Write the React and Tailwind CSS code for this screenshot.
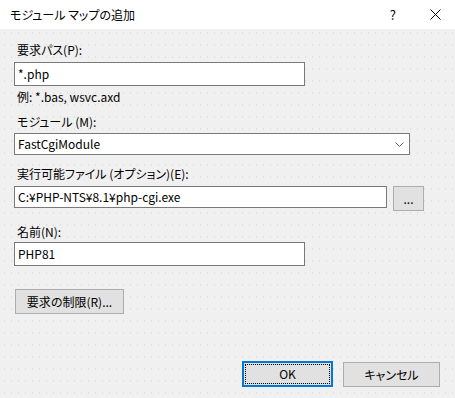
import React from 'react'

const font = "font-['Noto_Sans_CJK_JP','Noto_Sans',sans-serif] [font-feature-settings:'palt']"

const Label = ({ children, className = '' }) => (
  <div className={`pl-[3px] text-[12px] leading-[16px] text-black ${className}`}>{children}</div>
)

const TextBox = ({ value, className = '' }) => (
  <div className={`flex items-center border border-[#7a7a7a] bg-white pl-[3px] text-[12px] text-black ${className}`}>
    {value}
  </div>
)

const Button = ({ children, className = '' }) => (
  <div className={`flex items-center justify-center border border-[#adadad] bg-[#e1e1e1] text-[12px] text-black ${className}`}>
    {children}
  </div>
)

export default function App() {
  return (
    <div className={`flex h-[398px] w-[455px] flex-col overflow-hidden bg-[#f0f0f0] ${font}`}>
      {/* title bar */}
      <div className="flex h-[29px] shrink-0 items-center bg-white">
        <span className="pl-[10px] text-[12px] text-black">モジュール マップの追加</span>
        <span className="ml-auto mr-[34px] text-[13px] text-black">?</span>
        <svg width="11" height="11" viewBox="0 0 11 11" className="mr-[14px]">
          <path d="M0.5 0.5 L10.5 10.5 M10.5 0.5 L0.5 10.5" stroke="#000" strokeWidth="1" />
        </svg>
      </div>

      {/* body */}
      <div className="flex flex-1 flex-col bg-[radial-gradient(#e0e0e0_0.6px,transparent_0.8px)] bg-[size:7px_12px] bg-[position:1px_-2px] pl-[14px]">
        <Label className="mt-[13px]">要求パス(P):</Label>
        <TextBox value="*.php" className="mt-[4px] h-[24px] w-[291px]" />
        <Label className="mt-[3px]">例: *.bas, wsvc.axd</Label>

        <Label className="mt-[9px]">モジュール (M):</Label>
        <div className="mt-[3px] flex h-[22px] w-[396px] items-center border border-[#7a7a7a] bg-white pl-[3px] text-[12px] text-black">
          FastCgiModule
          <svg width="9" height="5" viewBox="0 0 9 5" className="ml-auto mr-[5px]">
            <path d="M0.5 0.5 L4.5 4.5 L8.5 0.5" fill="none" stroke="#606060" strokeWidth="1" />
          </svg>
        </div>

        <Label className="mt-[11px]">実行可能ファイル (オプション)(E):</Label>
        <div className="mt-[4px] flex gap-[6px]">
          <TextBox value="C:¥PHP-NTS¥8.1¥php-cgi.exe" className="h-[22px] w-[373px]" />
          <Button className="h-[25px] w-[31px]">...</Button>
        </div>

        <Label className="mt-[13px]">名前(N):</Label>
        <TextBox value="PHP81" className="mt-[2px] h-[24px] w-[291px]" />

        <Button className="mt-[23px] ml-[1px] h-[25px] w-[109px]">要求の制限(R)...</Button>

        <div className="mt-[47px] flex gap-[10px] pl-[228px]">
          <div className="flex h-[26px] w-[91px] items-center justify-center border-2 border-[#0078d7] bg-[#e1e1e1] p-px">
            <div className="flex h-full w-full items-center justify-center border border-dotted border-black text-[12px] text-black">
              OK
            </div>
          </div>
          <Button className="mt-px h-[25px] w-[97px]">キャンセル</Button>
        </div>
      </div>
    </div>
  )
}
